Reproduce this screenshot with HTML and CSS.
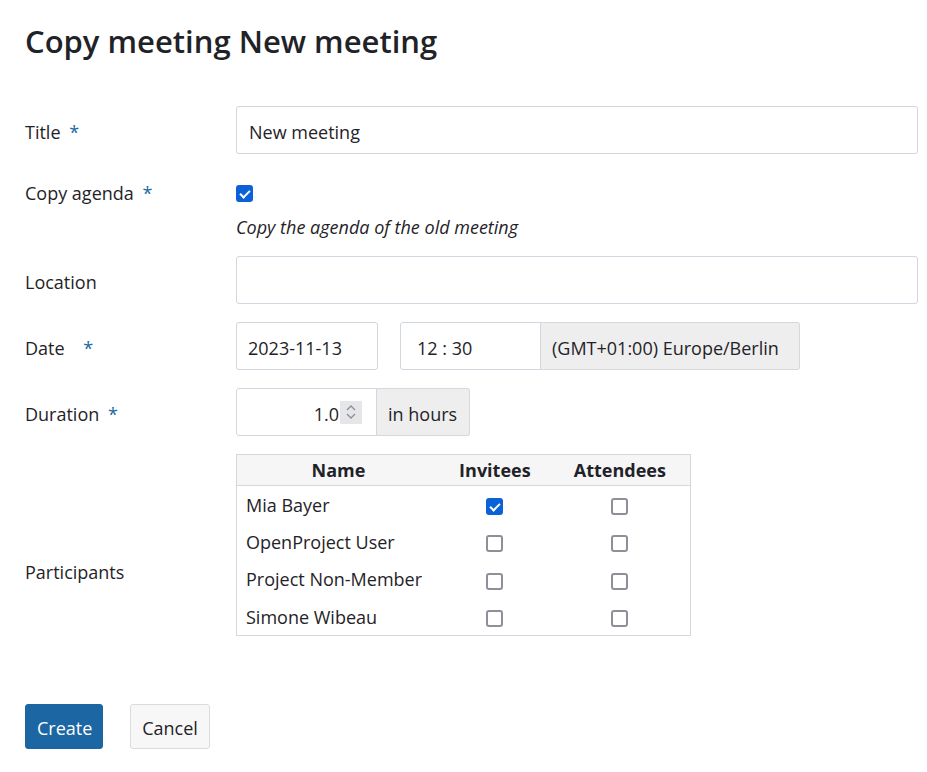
FILE: index.html
```html
<!DOCTYPE html>
<html lang="en">
<head>
<meta charset="utf-8">
<title>Copy meeting New meeting</title>
<link rel="stylesheet" href="styles.css">
</head>
<body>
<div class="page">
  <h1 class="page-title">Copy meeting New meeting</h1>
  <form class="form">
    <div class="row row-center">
      <label class="label">Title <span class="req">*</span></label>
      <div class="field"><input class="input input-full" type="text" value="New meeting"></div>
    </div>

    <div class="row row-top">
      <label class="label label-tall">Copy agenda <span class="req">*</span></label>
      <div class="field">
        <div class="check-line"><input class="cb" type="checkbox" checked></div>
        <div class="help">Copy the agenda of the old meeting</div>
      </div>
    </div>

    <div class="row row-center">
      <label class="label">Location</label>
      <div class="field"><input class="input input-full" type="text" value=""></div>
    </div>

    <div class="row row-center">
      <label class="label">Date <span class="req req-wide">*</span></label>
      <div class="field field-inline">
        <input class="input input-date" type="text" value="2023-11-13">
        <div class="group group-time">
          <input class="input input-time" type="text" value="12 : 30">
          <span class="addon addon-tz">(GMT+01:00) Europe/Berlin</span>
        </div>
      </div>
    </div>

    <div class="row row-center">
      <label class="label">Duration <span class="req">*</span></label>
      <div class="field field-inline">
        <div class="group">
          <div class="input number-box">
            <span class="number-val">1.0</span>
            <span class="spinner">
              <svg width="14" height="22" viewBox="0 0 14 22" aria-hidden="true">
                <path d="M3 9 L7 5 L11 9" fill="none" stroke="#8a8f96" stroke-width="1.3"/>
                <path d="M3 13 L7 17 L11 13" fill="none" stroke="#8a8f96" stroke-width="1.3"/>
              </svg>
            </span>
          </div>
          <span class="addon addon-hours">in hours</span>
        </div>
      </div>
    </div>

    <div class="row row-center">
      <label class="label">Participants</label>
      <div class="field field-table">
        <table class="ptable">
          <thead>
            <tr><th class="c-name">Name</th><th class="c-inv">Invitees</th><th class="c-att">Attendees</th></tr>
          </thead>
          <tbody>
            <tr><td class="c-name">Mia Bayer</td><td class="c-inv"><input class="cb" type="checkbox" checked></td><td class="c-att"><input class="cb" type="checkbox"></td></tr>
            <tr><td class="c-name">OpenProject User</td><td class="c-inv"><input class="cb" type="checkbox"></td><td class="c-att"><input class="cb" type="checkbox"></td></tr>
            <tr><td class="c-name">Project Non-Member</td><td class="c-inv"><input class="cb" type="checkbox"></td><td class="c-att"><input class="cb" type="checkbox"></td></tr>
            <tr><td class="c-name">Simone Wibeau</td><td class="c-inv"><input class="cb" type="checkbox"></td><td class="c-att"><input class="cb" type="checkbox"></td></tr>
          </tbody>
        </table>
      </div>
    </div>

    <div class="actions">
      <button class="btn btn-primary" type="button">Create</button>
      <button class="btn btn-default" type="button">Cancel</button>
    </div>
  </form>
</div>
</body>
</html>
```

FILE: styles.css
```css
* { box-sizing: border-box; }

body {
  margin: 0;
  font-family: "Open Sans", "Noto Sans", sans-serif;
  font-size: 18px;
  color: #1f2328;
  background: #ffffff;
}

.page {
  padding: 20px 9px 0 25px;
}

.page-title {
  margin: 0;
  font-size: 31px;
  font-weight: 600;
  line-height: 42px;
  color: #1f2328;
}

.form {
  margin-top: 44px;
  display: flex;
  flex-direction: column;
  gap: 18px;
}

.row {
  display: grid;
  grid-template-columns: 211px 682px;
}

.row-center { align-items: center; }
.row-top { align-items: start; }

.label {
  font-size: 18px;
  line-height: 24px;
  padding-top: 4px;
}

.label-tall {
  line-height: 42px;
  padding-top: 0;
}

.req {
  color: #1a67a3;
  margin-left: 4px;
}

.req-wide { margin-left: 14px; }

.field-inline {
  display: flex;
  align-items: center;
}

.input {
  height: 48px;
  border: 1px solid #d0d7de;
  border-radius: 3px;
  background: #fff;
  font-family: inherit;
  font-size: 18px;
  color: #1f2328;
  padding: 3px 12px 0;
  outline: none;
}

.input-full { width: 682px; }

.input-date { width: 142px; padding-left: 11px; }

.group {
  display: flex;
}

.group-time { margin-left: 22px; }

.input-time {
  width: 141px;
  padding-left: 16px;
  border-top-right-radius: 0;
  border-bottom-right-radius: 0;
}

.addon {
  height: 48px;
  display: flex;
  align-items: center;
  background: #eeeeee;
  border: 1px solid #d5d9de;
  border-left: none;
  border-radius: 0 3px 3px 0;
  padding: 3px 11px 0;
  white-space: nowrap;
}

.addon-tz { width: 259px; }
.addon-hours { width: 93px; }

.number-box {
  width: 141px;
  display: flex;
  align-items: center;
  justify-content: flex-end;
  padding: 0 14px 0 0;
  border-top-right-radius: 0;
  border-bottom-right-radius: 0;
}

.number-val { padding-top: 3px; }

.spinner {
  width: 22px;
  height: 23px;
  margin-left: 1px;
  background: #e6e6e9;
  display: flex;
  align-items: center;
  justify-content: center;
}

.check-line {
  height: 42px;
  display: flex;
  align-items: center;
}

.cb {
  -webkit-appearance: none;
  appearance: none;
  width: 17px;
  height: 17px;
  margin: 0;
  border: 2px solid #8f8f9a;
  border-radius: 3px;
  background: #fff;
  vertical-align: middle;
  position: relative;
}

.cb:checked {
  border-color: #0b62d6;
  background: #0b62d6;
}

.cb:checked::after {
  content: "";
  position: absolute;
  left: 4px;
  top: 1px;
  width: 4px;
  height: 8px;
  border: solid #fff;
  border-width: 0 2.5px 2.5px 0;
  transform: rotate(45deg);
}

.help {
  font-style: italic;
  line-height: 22px;
  padding-top: 2px;
}

.field-table {
  padding-bottom: 50px;
}

.ptable {
  width: 455px;
  border-collapse: collapse;
  border: 1px solid #d3d8df;
}

.ptable th {
  height: 31px;
  background: #f6f6f7;
  border-bottom: 1px solid #d3d8df;
  font-weight: 700;
  text-align: center;
  padding: 0;
}

.ptable td {
  height: 37.5px;
  padding: 0;
}

.ptable .c-name { width: 204px; }
.ptable td.c-name { padding-left: 9px; text-align: left; }
.ptable .c-inv { width: 110px; text-align: center; }
.ptable .c-att { width: 141px; text-align: center; }
.ptable td .cb { display: inline-block; vertical-align: middle; }

.actions {
  display: flex;
  gap: 27px;
}

.btn {
  height: 45px;
  font-family: inherit;
  font-size: 18px;
  border-radius: 3px;
  padding: 3px 11px 0;
  cursor: pointer;
}

.btn-primary {
  width: 78px;
  background: #1b66a3;
  color: #ffffff;
  border: 1px solid #1b66a3;
}

.btn-default {
  width: 80px;
  background: #f7f7f7;
  color: #1f2328;
  border: 1px solid #dcdcdc;
}
```
